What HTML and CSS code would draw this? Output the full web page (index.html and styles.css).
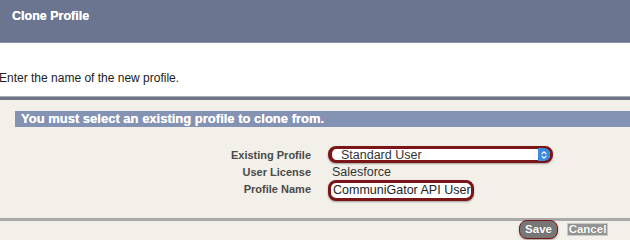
FILE: index.html
```html
<!DOCTYPE html>
<html lang="en">
<head>
    <meta charset="UTF-8">
    <meta name="viewport" content="width=device-width, initial-scale=1.0">
    <title>Clone Profile</title>
    <link rel="stylesheet" href="styles.css">
</head>
<body>
    <div class="header">
        <h2>Clone Profile</h2>
    </div>
    <div class="intro">
        <p>Enter the name of the new profile.</p>
    </div>
    <div class="panel">
        <div class="panel-title">You must select an existing profile to clone from.</div>
        <div class="fields">
            <label class="field-label" for="existingProfile">Existing Profile</label>
            <div class="select-wrap marked">
                <select id="existingProfile">
                    <option>Standard User</option>
                </select>
                <span class="stepper">
                    <svg viewBox="0 0 10 12" width="8" height="10">
                        <path d="M2 5 L5 2 L8 5" fill="none" stroke="#fff" stroke-width="1.4"/>
                        <path d="M2 7 L5 10 L8 7" fill="none" stroke="#fff" stroke-width="1.4"/>
                    </svg>
                </span>
            </div>
            <span class="field-label">User License</span>
            <span class="field-value">Salesforce</span>
            <label class="field-label" for="profileName">Profile Name</label>
            <div class="input-wrap marked">
                <input type="text" id="profileName" value="CommuniGator API User">
            </div>
        </div>
        <div class="buttons">
            <button class="btn btn-save marked">Save</button>
            <button class="btn btn-cancel">Cancel</button>
        </div>
    </div>
</body>
</html>
```

FILE: styles.css
```css
body {
    margin: 0;
    font-family: "Liberation Sans", Arial, sans-serif;
    background-color: #fff;
    height: 240px;
    overflow: hidden;
}
.header {
    background-color: #6b7590;
    height: 43px;
    padding: 0 12px;
    box-sizing: border-box;
    border-bottom: 1px solid #8690a8;
}
.header h2 {
    margin: 0;
    padding-top: 9px;
    font-size: 12.5px;
    color: #fff;
    font-weight: bold;
    text-shadow: 0 0 0.4px #fff;
}
.intro {
    height: 53px;
    background-color: #fff;
    border-bottom: 1px solid #a8adb8;
}
.intro p {
    margin: 0 0 0 -1px;
    padding-top: 28px;
    font-size: 12px;
    color: #222;
}
.panel {
    background-color: #f2f0e8;
    border-top: 3px solid #6c7488;
    padding-top: 11px;
    height: 139px;
}
.panel-title {
    margin-left: 15px;
    height: 16px;
    line-height: 16px;
    padding-left: 6px;
    background-color: #8492b4;
    color: #fff;
    font-weight: bold;
    font-size: 13px;
    text-shadow: 0 0 0.4px #fff;
}
.fields {
    display: grid;
    grid-template-columns: 311px 1fr;
    grid-auto-rows: 17px;
    column-gap: 17px;
    margin-top: 19px;
    align-items: center;
}
.field-label {
    text-align: right;
    font-size: 11px;
    font-weight: bold;
    color: #4a4a4a;
}
.field-value {
    font-size: 12.5px;
    color: #333;
    padding-left: 4px;
}
.marked {
    border: 3px solid #7c1517;
    border-radius: 8px;
    box-shadow: 0 1px 2px rgba(0, 0, 0, 0.35);
}
.select-wrap {
    display: flex;
    align-items: center;
    width: 218px;
    height: 11px;
    background-color: #fff;
    border-left-width: 4px;
}
.select-wrap select {
    flex: 1;
    appearance: none;
    border: none;
    background: transparent;
    font-family: "Liberation Sans", Arial, sans-serif;
    font-size: 12.5px;
    color: #333;
    padding: 0 0 0 9px;
    height: 15px;
    outline: none;
}
.stepper {
    display: flex;
    align-items: center;
    justify-content: center;
    width: 12px;
    height: 13px;
    background-color: #3c8ae0;
    border-radius: 0 6px 6px 0;
}
.input-wrap {
    width: 140px;
    height: 15px;
    margin-top: 3px;
    background-color: #fff;
    overflow: hidden;
}
.input-wrap input {
    display: block;
    width: 100%;
    height: 15px;
    line-height: 15px;
    border: none;
    padding: 0 0 0 2px;
    margin: 0;
    font-family: "Liberation Sans", Arial, sans-serif;
    font-size: 12.5px;
    color: #222;
    outline: none;
    box-sizing: border-box;
    background: transparent;
}
.buttons {
    margin-top: 21px;
    border-top: 3px solid #a9a9a9;
    display: flex;
    justify-content: flex-end;
    align-items: flex-start;
    gap: 9px;
    padding-right: 22px;
    padding-top: 2px;
}
.btn {
    box-sizing: border-box;
    height: 13px;
    padding: 0;
    border: 1px solid #c8c8c8;
    background-color: #959595;
    color: #fff;
    font-family: "Liberation Sans", Arial, sans-serif;
    font-size: 11.5px;
    font-weight: bold;
    line-height: 11px;
    cursor: pointer;
    text-shadow: 0 0 1px #555;
}
.btn-cancel {
    width: 41px;
}
.btn-save {
    width: 39px;
    height: 19px;
    margin-top: -3px;
    border-color: #7c1517;
    background-color: #777;
}
```
